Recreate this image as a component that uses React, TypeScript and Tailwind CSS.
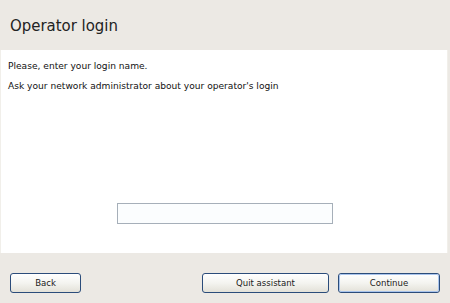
import React from 'react';

function XpButton({ label, width, isDefault = false }: { label: string; width: string; isDefault?: boolean }) {
  return (
    <button
      className={`${width} h-[20px] rounded-[3px] border border-[#2b4c7a] bg-gradient-to-b from-[#ffffff] via-[#f4f4f0] to-[#e3e1d8] text-[9.5px] text-[#1a1a1a] flex items-center justify-center`}
      style={{ fontFamily: '"DejaVu Sans Condensed", "DejaVu Sans", sans-serif' }}
    >
      <span
        className={
          isDefault
            ? 'w-full h-full rounded-[2px] border border-[#a9c4ec] flex items-center justify-center'
            : 'w-full h-full flex items-center justify-center'
        }
      >
        {label}
      </span>
    </button>
  );
}

export default function App() {
  return (
    <div
      className="w-[450px] h-[303px] bg-[#ece9e4] flex flex-col text-[#111]"
      style={{ fontFamily: '"DejaVu Sans", sans-serif' }}
    >
      <div className="h-[50px] pl-[10px] pt-[16px]">
        <h1
          className="text-[16.6px] leading-[20px] text-[#222]"
          style={{ fontFamily: '"DejaVu Sans Condensed", "DejaVu Sans", sans-serif' }}
        >
          Operator login
        </h1>
      </div>

      <div className="h-[203px] mr-[2px] bg-white border-l border-r border-[#f1efea] flex flex-col pl-[7px] pt-[10px]">
        <p className="text-[9.1px] leading-[12px]">Please, enter your login name.</p>
        <p className="text-[9.1px] leading-[12px] mt-[8px]">
          Ask your network administrator about your operator's login
        </p>
        <div className="mt-auto mb-[29px] ml-[109px]">
          <input
            type="text"
            className="w-[216px] h-[21px] border border-[#a6afb9] bg-[#fbfdfe] outline-none px-1 text-[10px]"
          />
        </div>
      </div>

      <div className="flex items-start pt-[20px] px-[10px]">
        <XpButton label="Back" width="w-[71px]" />
        <div className="ml-auto flex gap-[9px]">
          <XpButton label="Quit assistant" width="w-[127px]" />
          <XpButton label="Continue" width="w-[102px]" isDefault />
        </div>
      </div>
    </div>
  );
}
